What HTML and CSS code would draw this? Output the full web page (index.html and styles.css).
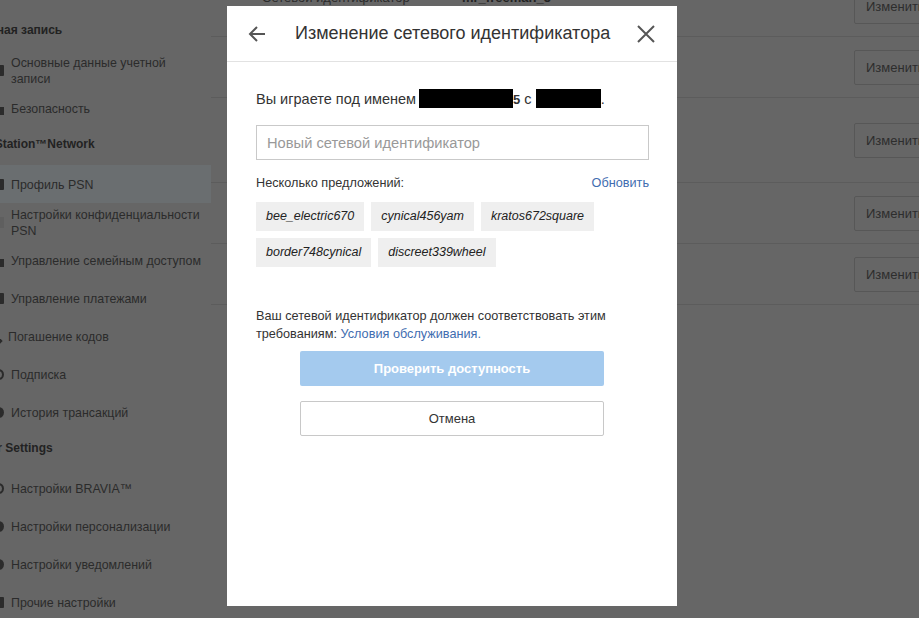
FILE: index.html
```html
<!DOCTYPE html>
<html lang="ru">
  <head>
    <meta charset="UTF-8" />
    <meta name="viewport" content="width=device-width, initial-scale=1.0" />
    <title>Изменение сетевого идентификатора</title>
    <link rel="stylesheet" href="styles.css">
  </head>
  <body>
    <div class="page">
      <aside class="sidebar">
        <div class="side-heading">Учетная запись</div>
        <div class="side-item"><span class="ico ico-square"></span><span>Основные данные учетной<br />записи</span></div>
        <div class="side-item"><span class="ico ico-lock"></span><span>Безопасность</span></div>

        <div class="side-heading">PlayStation™Network</div>
        <div class="side-item active"><span class="ico ico-square"></span><span>Профиль PSN</span></div>
        <div class="side-item"><span class="ico ico-faint"></span><span>Настройки конфиденциальности<br />PSN</span></div>
        <div class="side-item"><span class="ico ico-lock"></span><span>Управление семейным доступом</span></div>
        <div class="side-item"><span class="ico ico-square"></span><span>Управление платежами</span></div>
        <div class="side-item"><span class="ico ico-tag"></span><span>Погашение кодов</span></div>
        <div class="side-item"><span class="ico ico-ring"></span><span>Подписка</span></div>
        <div class="side-item"><span class="ico ico-dot"></span><span>История трансакций</span></div>

        <div class="side-heading">Other Settings</div>
        <div class="side-item"><span class="ico ico-ring"></span><span>Настройки BRAVIA™</span></div>
        <div class="side-item"><span class="ico ico-dot"></span><span>Настройки персонализации</span></div>
        <div class="side-item"><span class="ico ico-dot"></span><span>Настройки уведомлений</span></div>
        <div class="side-item"><span class="ico ico-square"></span><span>Прочие настройки</span></div>
      </aside>

      <main class="content">
        <div class="row row-first">
          <span class="row-label">Сетевой идентификатор</span>
          <span class="row-value">mr_freeman_5</span>
          <button class="edit-btn">Изменить</button>
        </div>
        <div class="row"><span class="row-label">Аватар</span><button class="edit-btn">Изменить</button></div>
        <div class="row row-tall"><span class="row-label">Имя</span><button class="edit-btn">Изменить</button></div>
        <div class="row"><span class="row-label">Обо мне</span><button class="edit-btn">Изменить</button></div>
        <div class="row"><span class="row-label">Языки</span><button class="edit-btn">Изменить</button></div>
      </main>
    </div>

    <div class="overlay">
      <div class="modal">
        <div class="modal-header">
          <svg class="hdr-icon" width="20" height="20" viewBox="0 0 20 20">
            <path d="M18 10H3M10 3L3 10L10 17" fill="none" stroke="#555" stroke-width="2" />
          </svg>
          <h2 class="modal-title">Изменение сетевого идентификатора</h2>
          <svg class="hdr-icon close" width="20" height="20" viewBox="0 0 20 20">
            <path d="M2 2L18 18M18 2L2 18" fill="none" stroke="#555" stroke-width="2" />
          </svg>
        </div>

        <div class="modal-body">
          <p class="playing-as">Вы играете под именем <span class="redact redact-id"></span><b>5</b> с <span class="redact redact-name"></span>.</p>

          <input class="id-input" type="text" placeholder="Новый сетевой идентификатор" />

          <div class="suggest-head">
            <span>Несколько предложений:</span>
            <a href="#" class="link">Обновить</a>
          </div>

          <div class="chips">
            <span class="chip">bee_electric670</span>
            <span class="chip">cynical456yam</span>
            <span class="chip">kratos672square</span>
            <span class="chip">border748cynical</span>
            <span class="chip">discreet339wheel</span>
          </div>

          <p class="terms">
            Ваш сетевой идентификатор должен соответствовать этим
            требованиям: <a href="#" class="link">Условия обслуживания.</a>
          </p>

          <div class="actions">
            <button class="btn btn-primary" disabled>Проверить доступность</button>
            <button class="btn btn-cancel">Отмена</button>
          </div>
        </div>
      </div>
    </div>
  </body>
</html>
```

FILE: styles.css
```css
* {
  margin: 0;
  padding: 0;
  box-sizing: border-box;
}

body {
  font-family: "Liberation Sans", Arial, sans-serif;
  font-size: 13px;
  background: #666666;
  color: #2b2b2b;
  width: 919px;
  height: 618px;
  overflow: hidden;
}

/* page behind the dialog (already dimmed) */
.page {
  display: flex;
  align-items: flex-start;
}

.sidebar {
  flex: none;
  width: 241px;
  margin-left: -30px;
  padding-top: 13px;
  font-size: 12.4px;
}

.side-heading {
  height: 38px;
  display: flex;
  align-items: center;
  padding-bottom: 5px;
  font-size: 12px;
  font-weight: bold;
  color: #222;
  white-space: nowrap;
}

.side-item {
  height: 38px;
  display: flex;
  align-items: center;
  gap: 7px;
  padding-left: 23px;
  padding-top: 1px;
  line-height: 16px;
  white-space: nowrap;
}

.side-item.active {
  background: #6a6e70;
}

.ico {
  flex: none;
  width: 11px;
  height: 11px;
  background: #2b2b2b;
}

.ico-square {
  border-radius: 1px;
}

.ico-lock {
  height: 8px;
  margin-top: 4px;
}

.ico-faint {
  background: #5f5f5f;
}

.ico-tag {
  width: 8px;
  height: 8px;
  transform: rotate(45deg);
  margin-top: 8px;
}

.ico-ring {
  background: transparent;
  border: 2px solid #2b2b2b;
  border-radius: 50%;
}

.ico-dot {
  border-radius: 50%;
}

.content {
  flex: none;
  width: 733px;
  margin-top: -24px;
}

.row {
  height: 61px;
  display: flex;
  align-items: center;
  border-bottom: 1px solid #5c5c5c;
  padding-left: 51px;
}

.row-first {
  align-items: flex-start;
  padding-top: 14px;
}

.row-first .edit-btn {
  margin-top: -1px;
}

.row-tall {
  height: 85px;
}

.row-label {
  width: 200px;
  color: #2b2b2b;
}

.row-value {
  font-weight: bold;
  color: #222;
}

.edit-btn {
  margin-left: auto;
  width: 90px;
  height: 35px;
  border: 1px solid #575757;
  border-radius: 2px;
  background: #666;
  color: #2d2d2d;
  font-family: inherit;
  font-size: 13px;
  text-align: left;
  padding-left: 11px;
}

/* dialog */
.overlay {
  position: fixed;
  inset: 0;
}

.modal {
  position: absolute;
  left: 227px;
  top: 6px;
  width: 450px;
  height: 600px;
  background: #fff;
  color: #333;
  font-size: 12.7px;
}

.modal-header {
  height: 56px;
  display: flex;
  align-items: center;
  padding: 0 21px 0 20px;
  border-bottom: 1px solid #e2e2e2;
}

.hdr-icon {
  flex: none;
}

.modal-title {
  flex: 1;
  margin-left: 28px;
  font-size: 18px;
  font-weight: normal;
  color: #333;
}

.modal-body {
  padding: 27px 28px 0 29px;
}

.playing-as {
  font-size: 14.5px;
  line-height: 20px;
  height: 20px;
}

.playing-as b {
  font-size: 13px;
}

.redact {
  display: inline-block;
  height: 19px;
  background: #000;
  vertical-align: -4px;
}

.redact-id {
  width: 94px;
  margin-left: -1px;
}

.redact-name {
  width: 65px;
}

.id-input {
  display: block;
  width: 100%;
  height: 35px;
  margin-top: 16px;
  border: 1px solid #c9c9c9;
  padding: 0 10px;
  font-family: inherit;
  font-size: 14.7px;
  color: #333;
}

.id-input::placeholder {
  color: #999;
}

.suggest-head {
  display: flex;
  justify-content: space-between;
  margin-top: 14px;
  line-height: 18px;
}

.link {
  color: #3f6db0;
  text-decoration: none;
}

.chips {
  display: flex;
  flex-wrap: wrap;
  gap: 7px 7px;
  width: 350px;
  margin-top: 10px;
}

.chip {
  height: 29px;
  line-height: 29px;
  padding: 0 10px;
  background: #efefef;
  font-size: 12.5px;
  font-style: italic;
  color: #222;
}

.terms {
  margin-top: 40px;
  line-height: 18px;
}

.actions {
  display: flex;
  flex-direction: column;
  align-items: center;
  gap: 15px;
  margin-top: 8px;
  margin-left: -1px;
}

.btn {
  width: 304px;
  height: 35px;
  font-family: inherit;
  font-size: 13px;
  border-radius: 2px;
}

.btn-primary {
  border: none;
  background: #a4caee;
  color: #fff;
  font-weight: bold;
}

.btn-cancel {
  border: 1px solid #c8c8c8;
  background: #fff;
  color: #333;
}
```
